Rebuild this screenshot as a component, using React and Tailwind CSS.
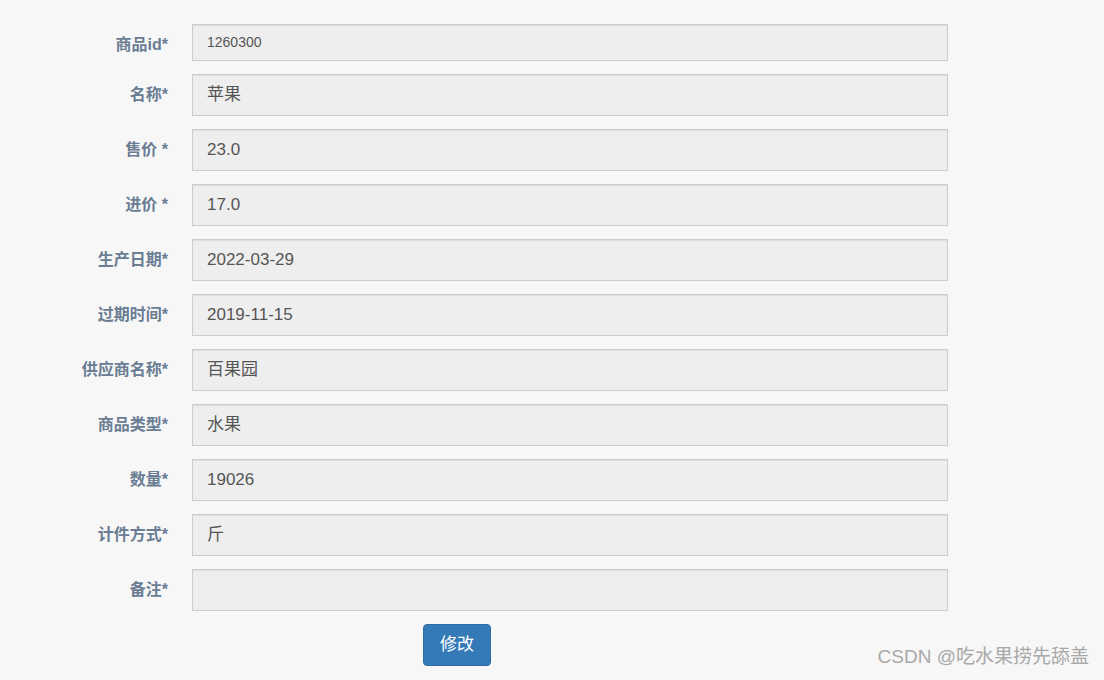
import React from "react";

const rows = [
  { label: "商品id*", value: "1260300", small: true },
  { label: "名称*", value: "苹果" },
  { label: "售价 *", value: "23.0" },
  { label: "进价 *", value: "17.0" },
  { label: "生产日期*", value: "2022-03-29" },
  { label: "过期时间*", value: "2019-11-15" },
  { label: "供应商名称*", value: "百果园" },
  { label: "商品类型*", value: "水果" },
  { label: "数量*", value: "19026" },
  { label: "计件方式*", value: "斤" },
  { label: "备注*", value: "" },
];

export default function App() {
  return (
    <div
      className="relative w-[1104px] h-[680px] bg-[#f7f7f7] overflow-hidden"
      style={{ fontFamily: '"Liberation Sans", Arial, "Noto Sans CJK SC", sans-serif' }}
    >
      <div className="pt-[24px] flex flex-col gap-[13px]">
        {rows.map((r, i) => (
          <div key={i} className="flex items-center">
            <div
              className={
                "w-[168px] text-right text-[16px] font-bold text-[#6a7d93] " +
                (r.small ? "pt-[5px]" : "")
              }
            >
              {r.label}
            </div>
            <div
              className={
                "ml-[24px] w-[756px] flex items-center border border-[#cccccc] bg-[#eeeeee] shadow-[inset_0_1px_1px_rgba(0,0,0,0.075)] pl-[14px] text-[#555555] " +
                (r.small ? "h-[37px] text-[14px]" : "h-[42px] text-[17px]")
              }
            >
              {r.value}
            </div>
          </div>
        ))}
        <div className="flex">
          <button className="ml-[423px] w-[68px] h-[42px] rounded-[4px] bg-[#337ab7] border border-[#2e6da4] text-white text-[17px]">
            修改
          </button>
        </div>
      </div>
      <div className="absolute right-[15px] bottom-[9px] text-[19px] text-[#a8a8a8]">
        CSDN @吃水果捞先舔盖
      </div>
    </div>
  );
}
